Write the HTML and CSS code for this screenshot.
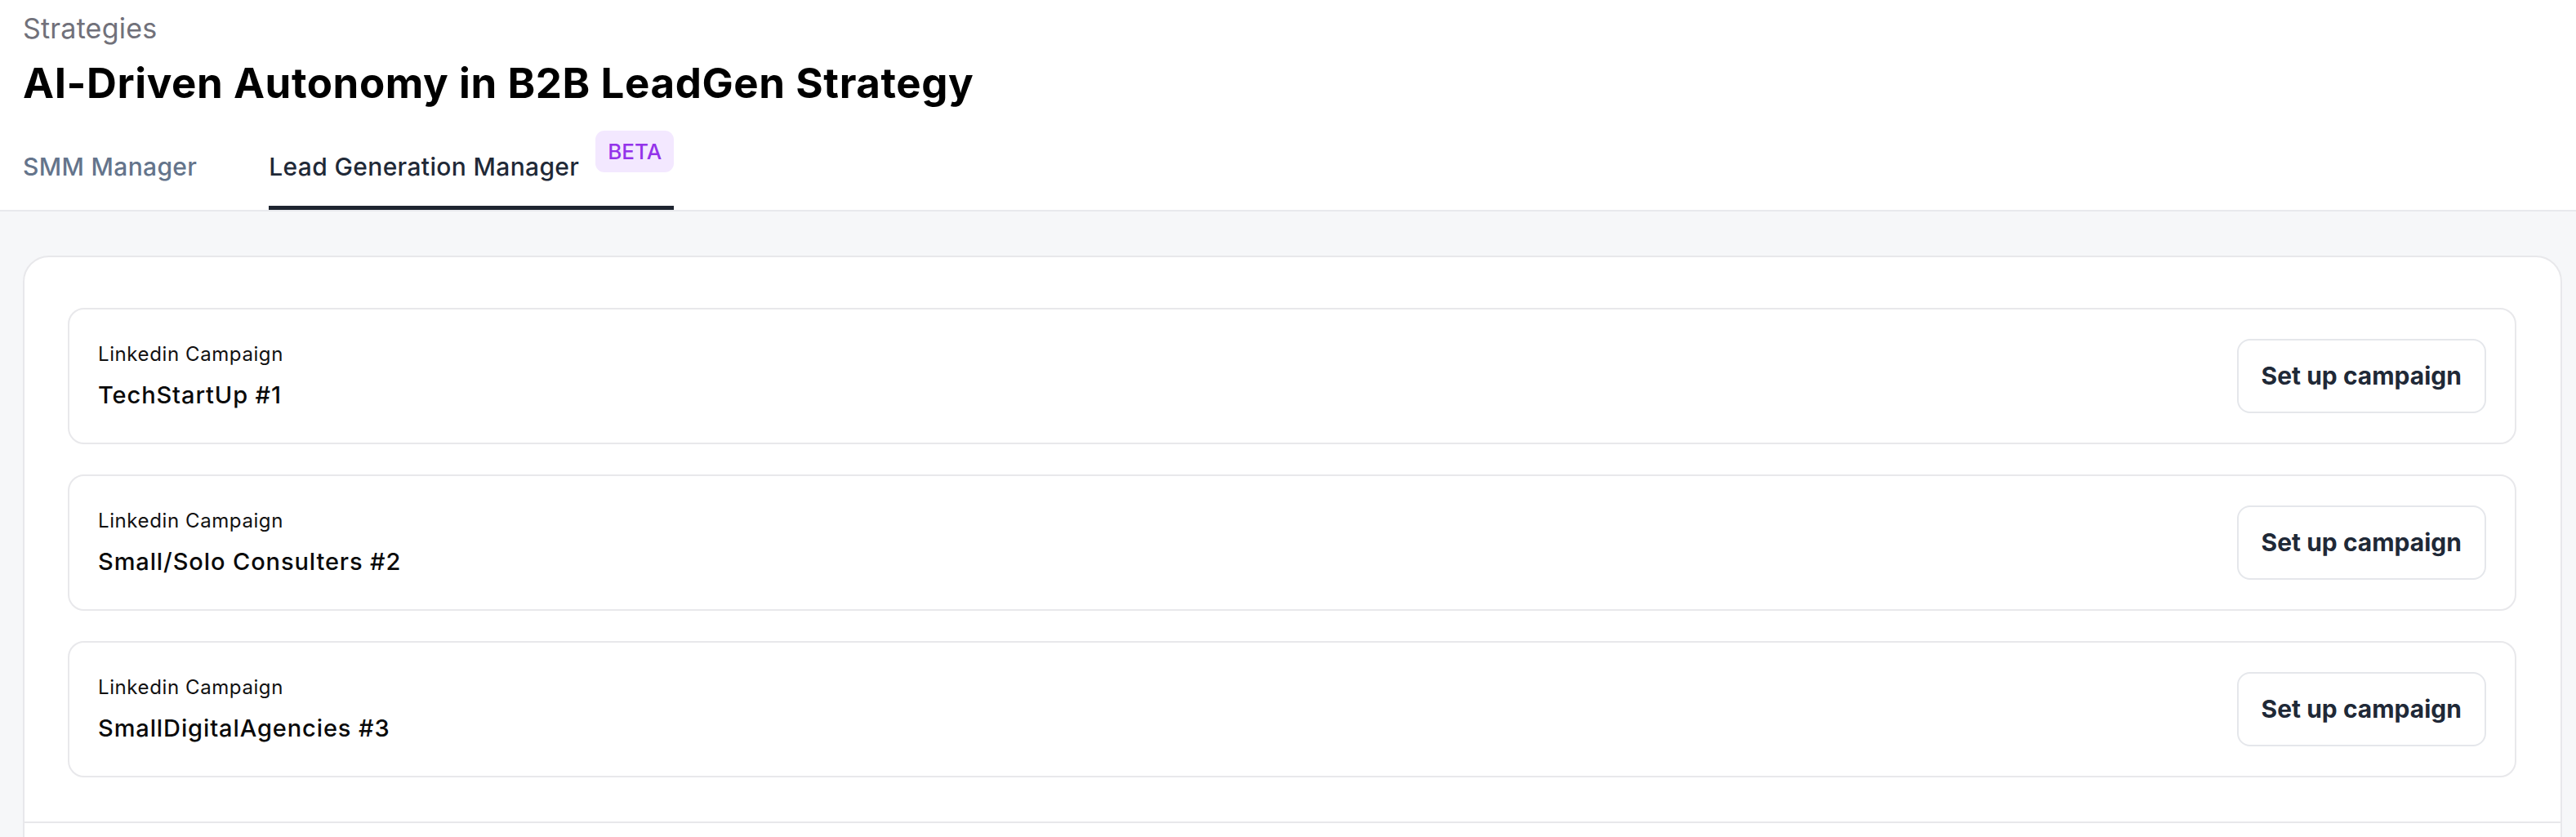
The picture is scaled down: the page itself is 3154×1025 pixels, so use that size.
FILE: index.html
```html
<!DOCTYPE html>
<html lang="en">
<head>
<meta charset="utf-8">
<title>AI-Driven Autonomy in B2B LeadGen Strategy</title>
<link rel="stylesheet" href="styles.css">
</head>
<body>
<header class="page-header">
  <div class="crumb">Strategies</div>
  <h1 class="title">AI-Driven Autonomy in B2B LeadGen Strategy</h1>
  <nav class="tabs">
    <div class="tab"><span class="tab-label">SMM Manager</span></div>
    <div class="tab tab-active"><span class="tab-label">Lead Generation Manager</span><span class="badge">BETA</span></div>
  </nav>
</header>
<main class="content">
  <section class="card">
    <div class="rows">
      <div class="row">
        <div class="row-text">
          <div class="row-label">Linkedin Campaign</div>
          <div class="row-name">TechStartUp #1</div>
        </div>
        <button class="btn">Set up campaign</button>
      </div>
      <div class="row">
        <div class="row-text">
          <div class="row-label">Linkedin Campaign</div>
          <div class="row-name">Small/Solo Consulters #2</div>
        </div>
        <button class="btn">Set up campaign</button>
      </div>
      <div class="row">
        <div class="row-text">
          <div class="row-label">Linkedin Campaign</div>
          <div class="row-name">SmallDigitalAgencies #3</div>
        </div>
        <button class="btn">Set up campaign</button>
      </div>
    </div>
    <div class="card-footer"></div>
  </section>
</main>
</body>
</html>
```
FILE: styles.css
```css
html, body {
  margin: 0;
  padding: 0;
  overflow: hidden;
  height: 100%;
}
body {
  font-family: Inter, "Noto Sans", sans-serif;
  background: #f6f7f9;
  color: #09090b;
}
.page-header {
  background: #ffffff;
  padding: 13px 0 0 28px;
  border-bottom: 2px solid #e8e9ed;
}
.crumb {
  font-size: 34px;
  line-height: 44px;
  color: #71717a;
  font-weight: 400;
  letter-spacing: 0.2px;
}
.title {
  margin: 15px 0 0 0;
  font-size: 51px;
  line-height: 60px;
  font-weight: 700;
  color: #000000;
  letter-spacing: 0.6px;
}
.tabs {
  display: flex;
  gap: 88px;
}
.tab {
  display: flex;
  align-items: flex-start;
  gap: 20px;
  padding-bottom: 28px;
  border-bottom: 5px solid transparent;
}
.tab-label {
  margin-top: 52px;
  font-size: 30px;
  line-height: 40px;
  font-weight: 500;
  color: #64748b;
  letter-spacing: 0.35px;
}
.tab-active {
  border-bottom-color: #1e2430;
}
.tab-active .tab-label {
  color: #1f2937;
}
.badge {
  margin-top: 28px;
  height: 51px;
  box-sizing: border-box;
  padding: 0 15px;
  display: flex;
  align-items: center;
  border-radius: 11px;
  background: #f3e8ff;
  color: #9333ea;
  font-size: 26px;
  font-weight: 500;
}
.content {
  padding: 54px 17px 0 28px;
}
.card {
  background: #ffffff;
  border: 2px solid #e8e8eb;
  border-radius: 32px;
  min-height: 900px;
}
.rows {
  display: flex;
  flex-direction: column;
  gap: 37px;
  padding: 62px 54px 54px 53px;
}
.row {
  display: flex;
  align-items: center;
  justify-content: space-between;
  box-sizing: border-box;
  height: 167px;
  border: 2px solid #e8e8eb;
  border-radius: 20px;
  padding: 0 35px;
}
.row-label {
  font-size: 24px;
  line-height: 32px;
  color: #111111;
  letter-spacing: 0.6px;
}
.row-name {
  margin-top: 15px;
  font-size: 29px;
  line-height: 38px;
  font-weight: 500;
  color: #0a0a0a;
  letter-spacing: 0.9px;
}
.btn {
  font-family: inherit;
  background: #ffffff;
  border: 2px solid #e5e7eb;
  border-radius: 16px;
  height: 91px;
  box-sizing: border-box;
  padding: 0 28px;
  font-size: 30px;
  line-height: 39px;
  font-weight: 700;
  color: #1f2937;
}
.card-footer {
  border-top: 2px solid #e8e8eb;
  height: 200px;
}
```
